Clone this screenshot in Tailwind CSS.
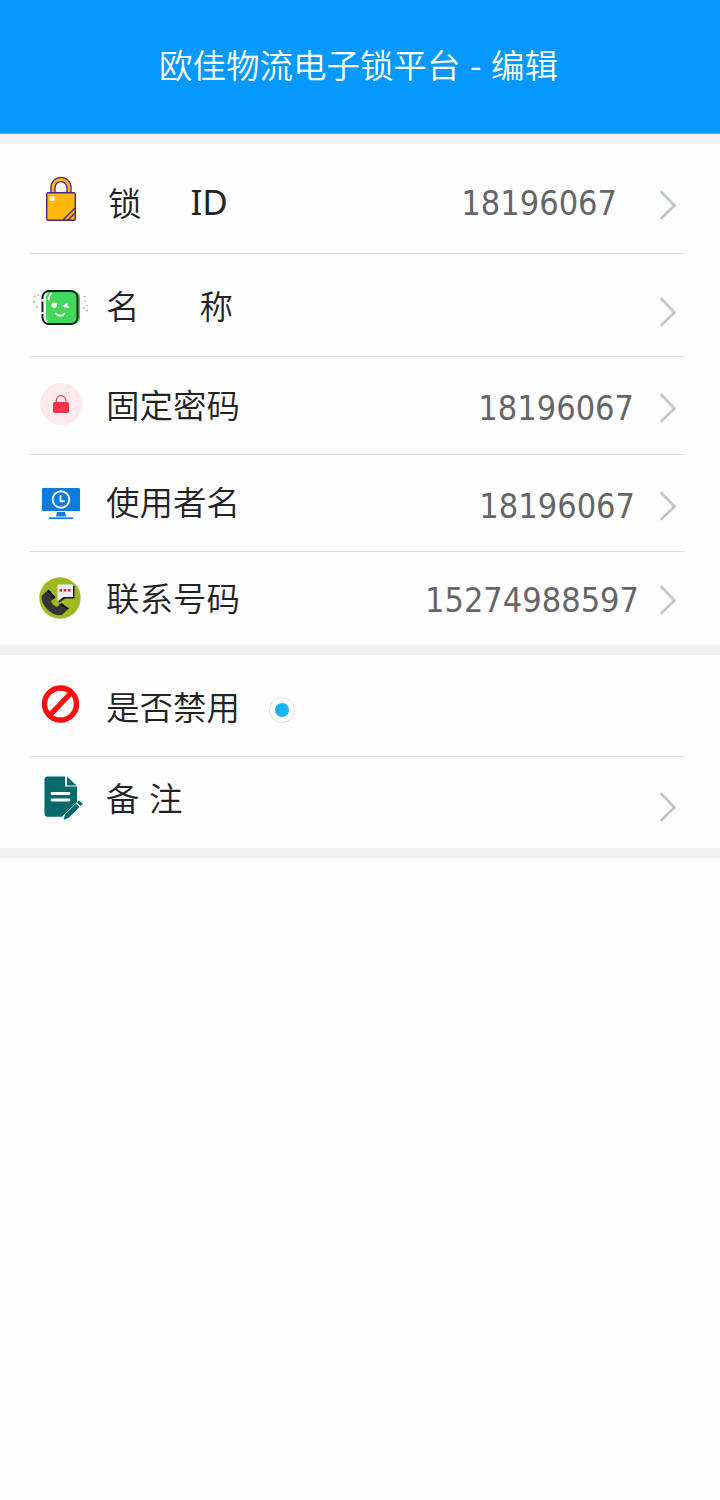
<!DOCTYPE html>
<html lang="zh-CN">
<head>
  <meta charset="UTF-8" />
  <meta name="viewport" content="width=device-width, initial-scale=1.0" />
  <title>欧佳物流电子锁平台 - 编辑</title>
  <script src="https://cdn.jsdelivr.net/npm/@tailwindcss/browser@4"></script>
</head>
<body class="bg-[#fefefe] min-h-screen text-[#222] text-[33.5px] leading-[40px] font-[350] font-['Noto_Sans_CJK_SC',sans-serif]">

  <header class="h-[134px] bg-[#0599ff] border-b border-[#4fb4fb] pt-[44px] pl-[159px] text-white whitespace-nowrap [word-spacing:2px]">
    <h1 class="font-[350]">欧佳物流电子锁平台 - 编辑</h1>
  </header>

  <main>
    <section class="border-y-10 border-[#f1f1f1] pl-[29px] pr-[35px]">
      <!-- Lock ID -->
      <div class="flex items-start h-[110px] border-b border-[#dedede]">
        <svg class="ml-px mt-[26px] shrink-0" width="60" height="60" viewBox="30 170 60 60" fill="none">
          <path d="M53 192v-4.500a8 8 0 0 1 16 0V192" stroke="#4b2487" stroke-width="5.400" />
          <path d="M53 192v-4.500a8 8 0 0 1 16 0V192" stroke="#ffb80a" stroke-width="2.800" />
          <rect x="46.700" y="192.700" width="28.600" height="27.600" rx="1.500" fill="#ffb80a" stroke="#4b2487" stroke-width="1.400" />
          <path d="M63 220l12-12M68 220l7-7" stroke="#4b2487" stroke-width="1.400" />
          <circle cx="52.200" cy="198.500" r="2.500" fill="#fff" />
        </svg>
        <div class="ml-[18px] mt-[38px] flex">
          <span>锁</span>
          <span class="ml-[49px] font-normal text-[35px] font-['Noto_Sans',sans-serif]">ID</span>
        </div>
        <span class="ml-auto mr-[42px] mt-[39px] font-normal text-[34px] text-[#666] font-['DejaVu_Sans_Condensed','DejaVu_Sans',sans-serif]">18196067</span>
        <svg class="mr-[6px] mt-[46px] shrink-0" width="20" height="30" viewBox="0 0 20 30" fill="none" stroke="#bcc5cc" stroke-width="2.600" stroke-linecap="round"><path d="M2.500 2l13 13.500L2.500 28" /></svg>
      </div>

      <!-- Name -->
      <div class="flex items-start h-[103px] border-b border-[#dedede]">
        <svg class="ml-px mt-[26px] shrink-0" width="60" height="60" viewBox="30 280 60 60" fill="none">
          <rect x="46" y="291" width="34" height="33" rx="6" fill="#42d85a" />
          <rect x="42.500" y="291" width="35" height="33" rx="6.500" stroke="#161c18" stroke-width="2" />
          <path d="M42.500 299v2.500M42.500 312v2" stroke="#fefefe" stroke-width="2.400" />
          <path d="M48.500 299.500q.5-3.500 2.500-6" stroke="#fff" stroke-width="1.900" stroke-linecap="round" />
          <circle cx="54.300" cy="305.200" r="2.700" fill="#fff" />
          <path d="M62.500 305.500l5-2.500v2l2 2.500c-2.500.8-5 0-7-2z" fill="#fff" />
          <path d="M56 313.500c2 3 6.500 3 8.500 0" stroke="#fff" stroke-width="1.800" stroke-linecap="round" />
          <g fill="#6fd98a"><circle cx="34" cy="302" r="1" /><circle cx="37" cy="307" r="1" /></g>
          <g fill="#f58b68"><circle cx="34.500" cy="296.500" r=".9" /><circle cx="84" cy="308" r=".9" /><circle cx="87" cy="310.500" r=".9" /><circle cx="87" cy="305.500" r=".8" /></g>
          <g fill="#8c8ce0"><circle cx="38.500" cy="295" r=".8" /><circle cx="84.500" cy="296.500" r=".8" /><circle cx="85" cy="301" r=".7" /></g>
        </svg>
        <div class="ml-[16px] mt-[31px] flex">
          <span>名</span>
          <span class="ml-[60px]">称</span>
        </div>
        <svg class="ml-auto mr-[6px] mt-[43px] shrink-0" width="20" height="30" viewBox="0 0 20 30" fill="none" stroke="#bcc5cc" stroke-width="2.600" stroke-linecap="round"><path d="M2.500 2l13 13.500L2.500 28" /></svg>
      </div>

      <!-- Fixed password -->
      <div class="flex items-start h-[98px] border-b border-[#dedede]">
        <svg class="ml-px mt-[18px] shrink-0" width="60" height="60" viewBox="30 375 60 60" fill="none">
          <circle cx="61" cy="404" r="21" fill="#fee9eb" />
          <path d="M56.300 403v-2.500a4.800 4.800 0 0 1 9.600 0v2.500" stroke="#ef3a50" stroke-width="1.200" />
          <rect x="53" y="402" width="16" height="11" rx="1.800" fill="#f1354c" />
        </svg>
        <span class="ml-[16px] mt-[27px]">固定密码</span>
        <span class="ml-auto mr-[25px] mt-[31px] font-normal text-[34px] text-[#666] font-['DejaVu_Sans_Condensed','DejaVu_Sans',sans-serif]">18196067</span>
        <svg class="mr-[6px] mt-[36px] shrink-0" width="20" height="30" viewBox="0 0 20 30" fill="none" stroke="#bcc5cc" stroke-width="2.600" stroke-linecap="round"><path d="M2.500 2l13 13.500L2.500 28" /></svg>
      </div>

      <!-- User name -->
      <div class="flex items-start h-[97px] border-b border-[#dedede]">
        <svg class="ml-px mt-[20px] shrink-0" width="60" height="60" viewBox="30 475 60 60" fill="none">
          <rect x="42" y="488" width="38" height="23" rx="1" fill="#0b7bdc" />
          <circle cx="61" cy="499.500" r="8.300" stroke="#fff" stroke-width="1.900" />
          <path d="M60.500 495v6.200h4.200" stroke="#fff" stroke-width="1.900" />
          <path d="M57 512h8l1 4.500H56z" fill="#0b7bdc" />
          <path d="M49 518.200h24" stroke="#0b7bdc" stroke-width="1.600" />
        </svg>
        <span class="ml-[16px] mt-[26px]">使用者名</span>
        <span class="ml-auto mr-[24px] mt-[31px] font-normal text-[34px] text-[#666] font-['DejaVu_Sans_Condensed','DejaVu_Sans',sans-serif]">18196067</span>
        <svg class="mr-[6px] mt-[36px] shrink-0" width="20" height="30" viewBox="0 0 20 30" fill="none" stroke="#bcc5cc" stroke-width="2.600" stroke-linecap="round"><path d="M2.500 2l13 13.500L2.500 28" /></svg>
      </div>

      <!-- Contact number -->
      <div class="flex items-start h-[93px]">
        <svg class="ml-px mt-[18px] shrink-0" width="60" height="60" viewBox="30 570 60 60" fill="none">
          <circle cx="60" cy="598" r="20.700" fill="#9cb91f" />
          <path d="M42 595.500l5-4.500 6.500 8-2.500 2c.5 2.500 3 5 6 6l2.500-2.500 7.500 5.500-4.500 4.500c-4 2-10 0-14.500-4.500s-7.500-10-6-14.500z" fill="#343438" />
          <path d="M46.500 591l2.200-1.500 7 8-2.200 1.500zM59.500 604.500l2-1.500 7.500 5.500-2 1.500z" fill="#0b0b0c" />
          <path d="M60 586h14.500v12.500H65l-6.500 4.500z" fill="#1c1830" />
          <path d="M57.500 584.500H73v12.500H63.500l-6 4.500z" fill="#ebeaf2" />
          <path d="M59.500 590.200h2.600M63.700 590.200h2.600M67.900 590.200h2.600" stroke="#c9254b" stroke-width="2.400" />
        </svg>
        <span class="ml-[16px] mt-[25px]">联系号码</span>
        <span class="ml-auto mr-[20px] mt-[28px] font-normal text-[34px] text-[#666] font-['DejaVu_Sans_Condensed','DejaVu_Sans',sans-serif]">15274988597</span>
        <svg class="mr-[6px] mt-[33px] shrink-0" width="20" height="30" viewBox="0 0 20 30" fill="none" stroke="#bcc5cc" stroke-width="2.600" stroke-linecap="round"><path d="M2.500 2l13 13.500L2.500 28" /></svg>
      </div>
    </section>

    <section class="border-b-10 border-[#f1f1f1] pl-[29px] pr-[35px]">
      <!-- Disabled or not -->
      <div class="flex items-start h-[102px] border-b border-[#dedede]">
        <svg class="ml-px mt-[20px] shrink-0" width="60" height="60" viewBox="30 675 60 60" fill="none" stroke="#fb1010" stroke-width="5.400">
          <circle cx="60.500" cy="704" r="16" />
          <path d="M49.500 715.500l22-23" />
        </svg>
        <span class="ml-[16px] mt-[31px]">是否禁用</span>
        <button class="ml-[29px] mt-[42px] size-[26px] rounded-full border border-[#dedede] bg-white flex items-center justify-center">
          <span class="size-[14px] rounded-full bg-[#1ab2f0]"></span>
        </button>
      </div>

      <!-- Remark -->
      <div class="flex items-start h-[91px]">
        <svg class="ml-px mt-[13px] shrink-0" width="60" height="60" viewBox="30 770 60 60" fill="none">
          <path d="M47.500 776.500H65V786.500H77V802L62 816.700H47.500a3 3 0 0 1-3-3V779.500a3 3 0 0 1 3-3z" fill="#05696b" />
          <path d="M67 776.500l9.500 9H67z" fill="#05696b" />
          <path d="M52 793.500h17M52 800h17" stroke="#fff" stroke-width="2.800" stroke-linecap="round" />
          <path d="M63.500 819.800l1.500-5.300 11-11 3.500 3.500-11 11zM77 802.500l2.200-2 3.500 3.500-2.200 2z" fill="#05696b" />
        </svg>
        <span class="ml-[16px] mt-[20px] [word-spacing:2px]">备 注</span>
        <svg class="ml-auto mr-[6px] mt-[35px] shrink-0" width="20" height="30" viewBox="0 0 20 30" fill="none" stroke="#bcc5cc" stroke-width="2.600" stroke-linecap="round"><path d="M2.500 2l13 13.500L2.500 28" /></svg>
      </div>
    </section>
  </main>

</body>
</html>
